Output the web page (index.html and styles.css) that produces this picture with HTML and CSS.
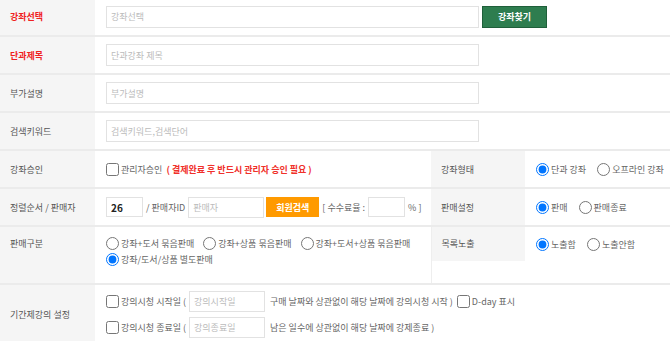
FILE: index.html
```html
<!DOCTYPE html>
<html>
<head lang="ko">
    <meta charset="UTF-8">
    <title>단과강좌 등록</title>
    <link rel="stylesheet" href="styles.css">
</head>
<body>
<table class="form-table">
    <colgroup>
        <col class="col-label">
        <col class="col-main">
        <col class="col-label2">
        <col>
    </colgroup>
    <tr>
        <th class="req">강좌선택</th>
        <td colspan="3">
            <input type="text" class="txt-long" placeholder="강좌선택">
            <button class="btn-green">강좌찾기</button>
        </td>
    </tr>
    <tr>
        <th class="req">단과제목</th>
        <td colspan="3"><input type="text" class="txt-long" placeholder="단과강좌 제목"></td>
    </tr>
    <tr>
        <th>부가설명</th>
        <td colspan="3"><input type="text" class="txt-long" placeholder="부가설명"></td>
    </tr>
    <tr>
        <th>검색키워드</th>
        <td colspan="3"><input type="text" class="txt-long" placeholder="검색키워드,검색단어"></td>
    </tr>
    <tr>
        <th>강좌승인</th>
        <td>
            <label class="chk"><input type="checkbox">관리자승인</label>
            <span class="notice">( 결제완료 후 반드시 관리자 승인 필요 )</span>
        </td>
        <th class="sub">강좌형태</th>
        <td>
            <label class="rdo"><input type="radio" name="type" checked>단과 강좌</label>
            <label class="rdo"><input type="radio" name="type">오프라인 강좌</label>
        </td>
    </tr>
    <tr>
        <th>정렬순서 / 판매자</th>
        <td>
            <input type="text" class="txt-num" value="26">
            <span class="txt">/ 판매자ID</span>
            <input type="text" class="txt-mid" placeholder="판매자">
            <button class="btn-orange">회원검색</button>
            <span class="txt">[ 수수료율 :</span>
            <input type="text" class="txt-rate">
            <span class="txt">% ]</span>
        </td>
        <th class="sub">판매설정</th>
        <td>
            <label class="rdo"><input type="radio" name="sale" checked>판매</label>
            <label class="rdo"><input type="radio" name="sale">판매종료</label>
        </td>
    </tr>
    <tr class="row-top">
        <th>판매구분</th>
        <td>
            <div class="rdo-list">
                <label class="rdo"><input type="radio" name="kind">강좌+도서 묶음판매</label>
                <label class="rdo"><input type="radio" name="kind">강좌+상품 묶음판매</label>
                <label class="rdo"><input type="radio" name="kind">강좌+도서+상품 묶음판매</label>
                <label class="rdo"><input type="radio" name="kind" checked>강좌/도서/상품 별도판매</label>
            </div>
        </td>
        <th class="sub-box"><div class="sub-label">목록노출</div></th>
        <td>
            <label class="rdo"><input type="radio" name="list" checked>노출함</label>
            <label class="rdo"><input type="radio" name="list">노출안함</label>
        </td>
    </tr>
    <tr class="row-period">
        <th>기간제강의 설정</th>
        <td colspan="3">
            <div class="period-line">
                <label class="chk"><input type="checkbox">강의시청 시작일 (</label>
                <input type="text" class="txt-mid" placeholder="강의시작일">
                <span class="txt">구매 날짜와 상관없이 해당 날짜에 강의시청 시작 )</span>
                <label class="chk"><input type="checkbox">D-day 표시</label>
            </div>
            <div class="period-line">
                <label class="chk"><input type="checkbox">강의시청 종료일 (</label>
                <input type="text" class="txt-mid" placeholder="강의종료일">
                <span class="txt">남은 일수에 상관없이 해당 날짜에 강제종료 )</span>
            </div>
        </td>
    </tr>
</table>
</body>
</html>
```

FILE: styles.css
```css
* {
    margin: 0;
    padding: 0;
    box-sizing: border-box;
}

body {
    font-family: "Noto Sans CJK KR", "Malgun Gothic", sans-serif;
    font-size: 9px;
    color: #666;
    background: #fff;
}

.form-table {
    width: 100%;
    margin-top: -2px;
    border-collapse: collapse;
    table-layout: fixed;
}

.col-label {
    width: 95px;
}

.col-main {
    width: 336px;
}

.col-label2 {
    width: 94px;
}

.form-table tr {
    height: 38px;
}

.form-table th,
.form-table td {
    border-bottom: 2px solid #ebebeb;
    vertical-align: middle;
}

.form-table th {
    background: #f5f5f5;
    color: #555;
    font-weight: normal;
    text-align: left;
    padding-left: 10px;
}

.form-table th.req {
    color: #f01f1f;
    font-weight: bold;
}

.form-table td {
    padding: 0 0 0 11px;
    white-space: nowrap;
}

.form-table th.sub {
    padding-left: 10px;
}

input[type="text"] {
    height: 22px;
    border: 1px solid #e2e2e2;
    padding: 0 4px;
    font-family: inherit;
    font-size: 9px;
    color: #222;
    vertical-align: middle;
    outline: none;
}

input::placeholder {
    color: #bbb;
}

.txt-long {
    width: 373px;
}

.txt-num {
    width: 37px;
    height: 20px !important;
    font-weight: bold;
    font-size: 10px !important;
}

.txt-mid {
    width: 76px;
    height: 21px !important;
}

.txt-rate {
    width: 37px;
    height: 20px !important;
}

.txt {
    vertical-align: middle;
    margin: 0 1px;
}

button {
    border: none;
    font-family: inherit;
    font-weight: bold;
    color: #fff;
    cursor: pointer;
    vertical-align: middle;
}

.btn-green {
    width: 65px;
    height: 22px;
    margin-left: 1px;
    background: #2e7d4f;
    border: 1px solid #1f5f3a;
    font-size: 9px;
}

.btn-orange {
    width: 53px;
    height: 20px;
    background: #ff9a00;
    font-size: 9px;
}

.chk,
.rdo {
    display: inline-flex;
    align-items: center;
    vertical-align: middle;
}

.chk input,
.rdo input {
    width: 13px;
    height: 13px;
    margin: 0 2px 0 0;
}

.rdo {
    margin-right: 9px;
}

.notice {
    color: #f0302a;
    font-weight: bold;
    vertical-align: middle;
    margin-left: 2px;
}

.row-top th,
.row-top td {
    vertical-align: top;
}

.row-top th {
    padding-top: 10px;
}

.row-top td {
    padding-top: 10px;
    height: 58px;
}

.rdo-list {
    display: flex;
    flex-wrap: wrap;
    row-gap: 3px;
    width: 320px;
}

.form-table th.sub-box {
    background: #fff;
    padding: 0;
    border-left: 1px solid #eee;
}

.sub-label {
    height: 34px;
    background: #f5f5f5;
    padding: 10px 0 0 10px;
}

.row-period td {
    padding-top: 6px;
    padding-bottom: 6px;
}

.period-line {
    display: flex;
    align-items: center;
    gap: 3px;
    height: 21px;
}

.period-line + .period-line {
    margin-top: 5px;
}

.period-line .txt {
    margin-left: 2px;
}
```
